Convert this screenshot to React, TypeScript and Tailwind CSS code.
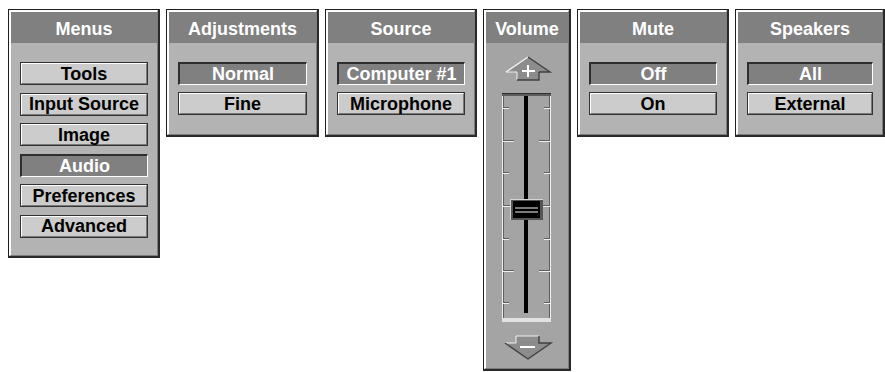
import React from "react";

type Item = { label: string; selected?: boolean };

function Button({ label, selected }: Item) {
  if (selected) {
    return (
      <div className="h-[23px] flex items-center justify-center bg-[#808080] border-t-2 border-l-2 border-t-[#2e2e2e] border-l-[#2e2e2e] border-b border-r border-b-white border-r-white">
        <span className="text-white font-bold text-[18px] leading-none">{label}</span>
      </div>
    );
  }
  return (
    <div className="h-[23px] border border-[#333333]">
      <div className="h-full flex items-center justify-center bg-[#cccccc] border-t border-l border-t-white border-l-white border-b border-r border-b-[#7a7a7a] border-r-[#7a7a7a]">
        <span className="text-black font-bold text-[18px] leading-none">{label}</span>
      </div>
    </div>
  );
}

function Panel({
  title,
  className,
  bodyClassName,
  children,
}: {
  title: string;
  className: string;
  bodyClassName: string;
  children: React.ReactNode;
}) {
  return (
    <div
      className={
        "shrink-0 border-t border-l border-t-[#1e1e1e] border-l-[#1e1e1e] border-r-2 border-b-2 border-r-[#2a2a2a] border-b-[#2a2a2a] " +
        className
      }
    >
      <div className="flex flex-col border-t-2 border-l-2 border-t-white border-l-white border-r border-b border-r-[#7c7c7c] border-b-[#7c7c7c]">
        <div className="h-[31px] bg-[#808080] flex items-center justify-center pt-[3px]">
          <span className="text-white font-bold text-[18px] leading-none">{title}</span>
        </div>
        <div className={bodyClassName}>{children}</div>
      </div>
    </div>
  );
}

function ButtonList({ items }: { items: Item[] }) {
  return (
    <>
      {items.map((it) => (
        <Button key={it.label} label={it.label} selected={it.selected} />
      ))}
    </>
  );
}

function VolumeArt() {
  const ticks: { y: number; long: boolean }[] = [
    { y: 64, long: false },
    { y: 97, long: true },
    { y: 129, long: false },
    { y: 162, long: true },
    { y: 195, long: false },
    { y: 227, long: true },
    { y: 259, long: false },
  ];
  const dark = "#5e5e5e";
  const light = "#f0f0f0";
  return (
    <svg width="82" height="325" viewBox="0 0 82 325" shapeRendering="crispEdges">
      {/* up arrow */}
      <polygon points="42,14 64,29 53,29 53,37 31,37 31,29 20,29" fill="#8c8c8c" shapeRendering="auto" />
      <polyline points="20,29 42,14" fill="none" stroke="#f0f0f0" strokeWidth="1.4" shapeRendering="auto" />
      <polyline points="42,14 64,29 53,29" fill="none" stroke="#404040" strokeWidth="1.4" shapeRendering="auto" />
      <polyline points="20,29 31,29 31,37" fill="none" stroke="#f0f0f0" strokeWidth="1" shapeRendering="auto" />
      <polyline points="53,29 53,37 31,37" fill="none" stroke="#404040" strokeWidth="1.4" shapeRendering="auto" />
      <rect x="36" y="27" width="13" height="2" fill="#ffffff" />
      <rect x="41" y="22" width="2" height="12" fill="#ffffff" />

      {/* slider frame */}
      <rect x="16" y="50" width="49" height="1" fill="#2e2e2e" />
      <rect x="16" y="51" width="49" height="2" fill="#5c5c5c" />
      <rect x="16" y="275" width="49" height="4" fill="#e2e2e2" />

      {/* left engraved rail */}
      <rect x="16" y="53" width="1" height="222" fill={light} />
      <rect x="17" y="53" width="1" height="222" fill={dark} />
      {/* right engraved rail */}
      <rect x="63" y="53" width="1" height="222" fill={dark} />
      <rect x="64" y="53" width="1" height="222" fill={light} />

      {ticks.map((t) => (
        <g key={t.y}>
          <rect x="17" y={t.y} width={t.long ? 11 : 6} height="1" fill={dark} />
          <rect x="17" y={t.y + 1} width={t.long ? 11 : 6} height="1" fill={light} />
          <rect x={t.long ? 53 : 58} y={t.y} width={t.long ? 11 : 6} height="1" fill={dark} />
          <rect x={t.long ? 53 : 58} y={t.y + 1} width={t.long ? 11 : 6} height="1" fill={light} />
        </g>
      ))}

      {/* center track */}
      <rect x="38" y="53" width="4" height="217" fill="#000000" />

      {/* thumb */}
      <rect x="24" y="156" width="33" height="21" fill="#d6d6d6" />
      <rect x="25" y="157" width="32" height="20" fill="#555555" />
      <rect x="27" y="158" width="27" height="17" fill="#000000" />
      <rect x="29" y="164" width="23" height="2" fill="#7a7a7a" />
      <rect x="29" y="168" width="23" height="2" fill="#7a7a7a" />

      {/* down arrow */}
      <polygon points="30,293 53,293 53,300 65,300 42,316 19,300 30,300" fill="#8c8c8c" shapeRendering="auto" />
      <polyline points="30,300 30,293 53,293" fill="none" stroke="#f0f0f0" strokeWidth="1" shapeRendering="auto" />
      <polyline points="19,300 30,300" fill="none" stroke="#f0f0f0" strokeWidth="1" shapeRendering="auto" />
      <polyline points="53,293 53,300 65,300 42,316 19,300" fill="none" stroke="#404040" strokeWidth="1.4" shapeRendering="auto" />
      <rect x="34" y="303" width="15" height="2" fill="#ffffff" />
    </svg>
  );
}

export default function App() {
  return (
    <div className="w-[885px] h-[372px] bg-white overflow-hidden flex items-start gap-[6px] pl-[8px] pt-[9px] font-['Liberation_Sans',Arial,sans-serif]">
      <Panel
        title="Menus"
        className="w-[152px]"
        bodyClassName="bg-[#b3b3b3] flex flex-col gap-[7.6px] px-[9px] pt-[19px] pb-[17px]"
      >
        <ButtonList
          items={[
            { label: "Tools" },
            { label: "Input Source" },
            { label: "Image" },
            { label: "Audio", selected: true },
            { label: "Preferences" },
            { label: "Advanced" },
          ]}
        />
      </Panel>
      <Panel
        title="Adjustments"
        className="w-[153px]"
        bodyClassName="bg-[#b3b3b3] flex flex-col gap-[7px] px-[9px] pt-[19px] pb-[19px]"
      >
        <ButtonList items={[{ label: "Normal", selected: true }, { label: "Fine" }]} />
      </Panel>
      <Panel
        title="Source"
        className="w-[152px]"
        bodyClassName="bg-[#b3b3b3] flex flex-col gap-[7px] px-[9px] pt-[19px] pb-[19px]"
      >
        <ButtonList items={[{ label: "Computer #1", selected: true }, { label: "Microphone" }]} />
      </Panel>
      <Panel title="Volume" className="w-[88px]" bodyClassName="bg-[#a4a4a4] h-[325px]">
        <VolumeArt />
      </Panel>
      <Panel
        title="Mute"
        className="w-[152px]"
        bodyClassName="bg-[#b3b3b3] flex flex-col gap-[7px] px-[9px] pt-[19px] pb-[19px]"
      >
        <ButtonList items={[{ label: "Off", selected: true }, { label: "On" }]} />
      </Panel>
      <Panel
        title="Speakers"
        className="w-[150px]"
        bodyClassName="bg-[#b3b3b3] flex flex-col gap-[7px] px-[9px] pt-[19px] pb-[19px]"
      >
        <ButtonList items={[{ label: "All", selected: true }, { label: "External" }]} />
      </Panel>
    </div>
  );
}
